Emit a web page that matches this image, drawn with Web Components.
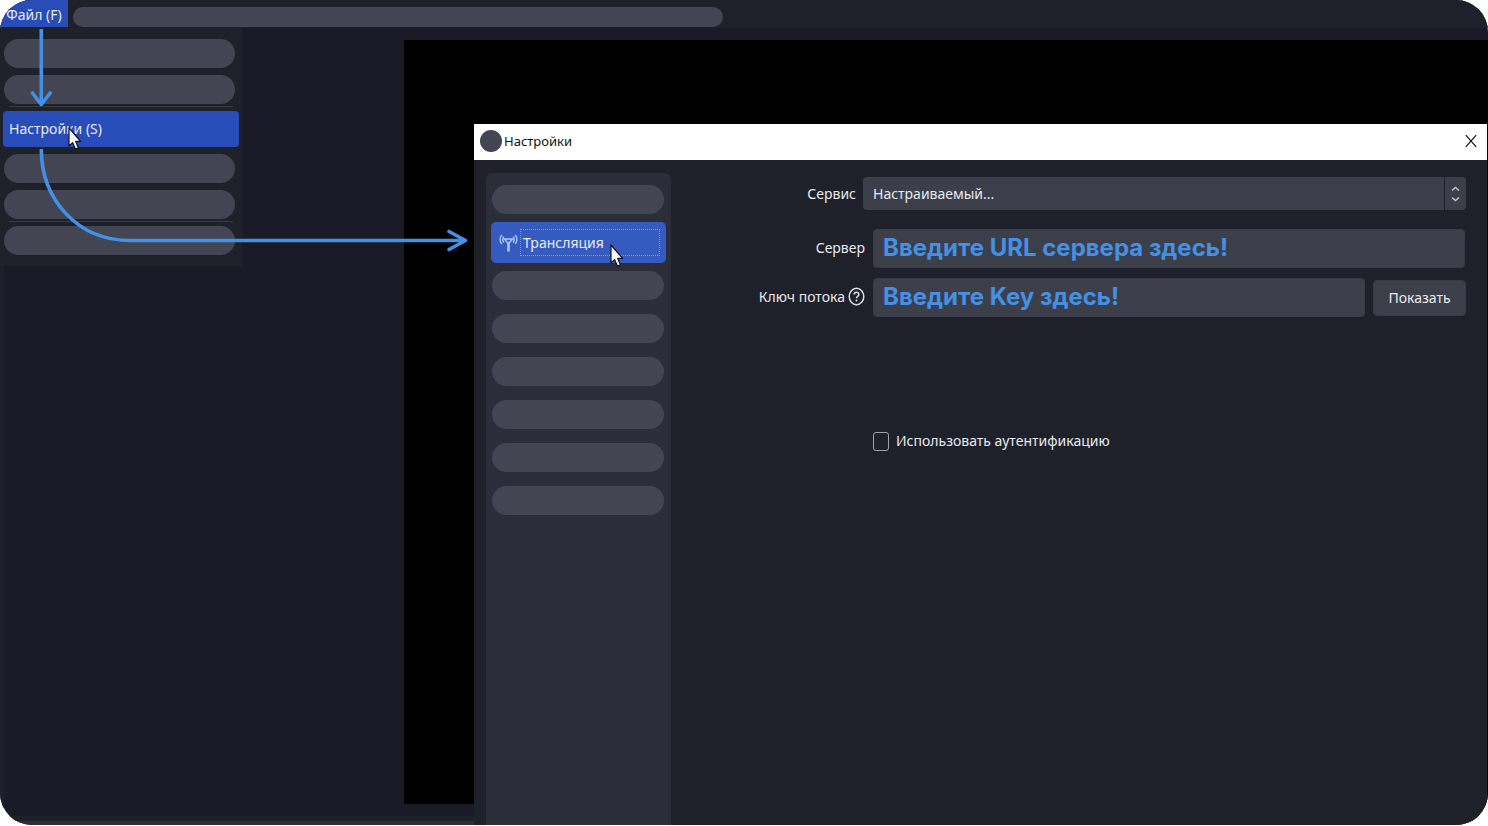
<!DOCTYPE html>
<html lang="ru">
<head>
<meta charset="utf-8">
<title>Настройки</title>
<style>
html, body { margin: 0; height: 100%; background: #fff; }
body {
  font: 14px/20px "Noto Sans", "Open Sans", sans-serif;
  color: #e8e9ee;
  --bar: #1f212a;
  --desk: #1a1b26;
  --panel: #2b2d38;
  --pill: #434552;
  --field: #3c3f4a;
  --accent: #284cb8;
  --hint: #4490e6;
}
</style>
</head>
<body>
<app-screen>
  <menu-bar slot="bar"></menu-bar>
  <preview-area></preview-area>
  <file-menu slot="overlay"></file-menu>
  <settings-window slot="overlay" heading="Настройки">
    <settings-nav slot="nav"></settings-nav>
    <stream-form></stream-form>
  </settings-window>
  <guide-arrows slot="overlay"></guide-arrows>
</app-screen>

<script>
function define(name, html, setup) {
  const template = document.createElement('template');
  template.innerHTML = html;
  customElements.define(name, class extends HTMLElement {
    constructor() {
      super();
      this.attachShadow({ mode: 'open' }).append(template.content.cloneNode(true));
    }
    connectedCallback() { if (setup) setup(this, this.shadowRoot); }
  });
}

define('place-holder', `
  <style>
    :host { display: block; box-sizing: border-box; height: 29px; border-radius: 15px; background: var(--pill); }
  </style>`);

define('mouse-pointer', `
  <style>
    :host { display: block; width: 14px; height: 24px; }
    svg { display: block; }
  </style>
  <svg width="14" height="24" viewBox="0 0 14 24" aria-hidden="true">
    <path d="M1 1V19L4.6 15.6L7.4 22L10.4 20.7L7.7 14.4H12.6Z" fill="#fff" stroke="#10131f" stroke-width="1.2" stroke-linejoin="round"/>
  </svg>`);

define('app-screen', `
  <style>
    :host { position: relative; display: flex; flex-direction: column; box-sizing: border-box;
      height: calc(100vh - 1px); min-height: 560px; overflow: hidden; border-radius: 32px; background: var(--desk); }
    main { flex: 1; display: flex; border-left: 4px solid #1d1f29; }
    footer { height: 4px; border-top: 5px solid var(--bar); background: var(--panel); }
  </style>
  <slot name="bar"></slot>
  <main><slot></slot></main>
  <footer></footer>
  <slot name="overlay"></slot>`);

define('menu-bar', `
  <style>
    :host { display: flex; align-items: flex-start; gap: 5px; height: 28px; background: var(--bar); }
    button { width: 68px; height: 27px; padding: 2px 0 0; border: 0; background: var(--accent); color: inherit; font: inherit; line-height: 24px; }
    place-holder { width: 44%; max-width: 650px; height: 20px; margin-top: 7px; }
  </style>
  <button type="button">Файл (F)</button>
  <place-holder></place-holder>`);

define('preview-area', `
  <style>
    :host { flex: 1; display: flex; padding: 12px 0 12px 400px; }
    div { flex: 1; background: #000; }
  </style>
  <div></div>`);

define('file-menu', `
  <style>
    :host { position: absolute; top: 28px; left: 0; box-sizing: border-box; width: 242px; padding: 11px 3px 4px; background: var(--bar); }
    nav { display: flex; flex-direction: column; }
    place-holder { width: 231px; margin: 0 1px 7px; }
    hr { width: 224px; height: 1px; margin: -5px 6px 4px; border: 0; background: #383a43; }
    button { position: relative; width: 236px; height: 36px; margin-bottom: 7px; padding: 0 6px; border: 0; border-radius: 4px;
      background: var(--accent); color: inherit; font: inherit; text-align: left; }
    mouse-pointer { position: absolute; left: 65px; top: 16px; }
  </style>
  <nav>
    <place-holder></place-holder>
    <place-holder></place-holder>
    <hr>
    <button type="button">Настройки (S)<mouse-pointer></mouse-pointer></button>
    <place-holder></place-holder>
    <place-holder></place-holder>
    <hr>
    <place-holder></place-holder>
  </nav>`);

define('settings-window', `
  <style>
    :host { position: absolute; top: 124px; left: 474px; right: 1px; bottom: 0; display: flex; flex-direction: column; background: var(--bar); }
    header { display: flex; align-items: center; gap: 2px; box-sizing: border-box; height: 36px; padding: 0 9px 2px 6px; background: #fff; color: #111; }
    i { width: 22px; height: 22px; border-radius: 50%; background: var(--pill); }
    h1 { flex: 1; margin: 0; font: inherit; font-size: 13px; line-height: 22px; }
    header button { width: 14px; height: 14px; padding: 0; border: 0; background: none; }
    svg { display: block; }
    section { flex: 1; display: flex; padding: 13px 21px 0 12px; }
  </style>
  <header><i></i><h1></h1>
    <button type="button" aria-label="Закрыть"><svg width="14" height="14" viewBox="0 0 14 14"><path d="M1.8 1.2L12.2 12.8M12.2 1.2L1.8 12.8" stroke="#111" stroke-width="1.2"/></svg></button>
  </header>
  <section><slot name="nav"></slot><slot></slot></section>`,
  (el, root) => { root.querySelector('h1').textContent = el.getAttribute('heading'); });

define('settings-nav', `
  <style>
    :host { box-sizing: border-box; width: 185px; padding: 12px 5px; border-radius: 6px 6px 0 0; background: var(--panel); }
    nav { display: flex; flex-direction: column; }
    place-holder { width: 172px; margin: 0 1px 14px; }
    place-holder:first-child { margin-bottom: 8px; }
    button { position: relative; display: flex; align-items: center; gap: 2px; height: 41px; margin-bottom: 8px; padding: 0 6px 0 8px;
      border: 0; border-radius: 5px; background: #365bc0; color: inherit; font: inherit; text-align: left; }
    span { flex: 1; box-sizing: border-box; height: 27px; padding-left: 2px; border: 1px dotted #b39a62; line-height: 25px; }
    mouse-pointer { position: absolute; left: 119px; top: 22px; }
  </style>
  <nav>
    <place-holder></place-holder>
    <button type="button">
      <svg width="19" height="18" viewBox="0 0 19 18" fill="none" stroke="#a9c6f3" aria-hidden="true">
        <path d="M5.4 5H13.6L9.5 9.6Z" stroke-width="1.4"/>
        <path d="M9.5 8V17.5" stroke-width="2.6"/>
        <path d="M4.8 2.6Q2.8 5.5 4.8 8.6M14.2 2.6Q16.2 5.5 14.2 8.6" stroke-width="1.5"/>
        <path d="M2.8 1Q-.6 5.5 2.8 10M16.2 1Q19.6 5.5 16.2 10" stroke-width="1.4"/>
      </svg>
      <span>Трансляция</span><mouse-pointer></mouse-pointer>
    </button>
    <place-holder></place-holder>
    <place-holder></place-holder>
    <place-holder></place-holder>
    <place-holder></place-holder>
    <place-holder></place-holder>
    <place-holder></place-holder>
  </nav>`);

define('stream-form', `
  <style>
    :host { flex: 1; min-width: 0; }
    form { display: grid; grid-template-columns: 194px minmax(0, 1fr); column-gap: 8px; padding-top: 4px; }
    label { white-space: nowrap; }
    .name { display: flex; align-items: center; justify-content: flex-end; gap: 3px; }
    form > .name { margin-bottom: 12px; }
    .service { grid-column: 1 / -1; display: grid; grid-template-columns: 185px minmax(0, 1fr); column-gap: 7px; margin-bottom: 19px; }
    .select { position: relative; display: flex; }
    select { appearance: none; flex: 1; height: 33px; padding: 1px 30px 0 10px; border: 0; border-radius: 4px; background: var(--field); color: inherit; font: inherit; }
    .select svg { position: absolute; right: 0; top: 0; pointer-events: none; }
    input[type=text] { box-sizing: border-box; flex: 1; min-width: 0; height: 39px; padding: 0 9px 2px; border: 1px solid #383b46; border-radius: 4px;
      background: var(--field); color: var(--hint); font: 700 24px/30px Inter, sans-serif; }
    input::placeholder { color: var(--hint); opacity: 1; }
    .field { display: flex; align-items: center; gap: 8px; margin-bottom: 10px; }
    .server { margin-right: 1px; }
    .field button { width: 93px; height: 36px; padding: 0; border: 1px solid #383b46; border-radius: 4px; background: var(--field); color: inherit; font: inherit; }
    .check { grid-column: 2; display: flex; align-items: center; gap: 7px; margin-top: 104px; }
    input[type=checkbox] { appearance: none; box-sizing: border-box; width: 16px; height: 19px; margin: 0; border: 1px solid #a0a1a8; border-radius: 3px; }
  </style>
  <form>
    <div class="service">
      <label class="name" for="service">Сервис</label>
      <div class="select">
        <select id="service"><option>Настраиваемый...</option></select>
        <svg width="22" height="33" viewBox="0 0 22 33" fill="none" aria-hidden="true">
          <path d="M.5 0V33" stroke="#1f212a"/>
          <path d="M8 13.5L11.5 10.5L15 13.5M8 20.5L11.5 23.5L15 20.5" stroke="#c4c5ca" stroke-width="1.5"/>
        </svg>
      </div>
    </div>
    <label class="name" for="server">Сервер</label>
    <div class="field server"><input type="text" id="server" placeholder="Введите URL сервера здесь!"></div>
    <label class="name" for="key">Ключ потока
      <svg width="17" height="19" viewBox="0 0 17 19" fill="none" stroke="#dcdde0" aria-hidden="true">
        <ellipse cx="8.5" cy="9.5" rx="7.3" ry="8.3" stroke-width="1.5"/>
        <path d="M6.2 7.5Q6.2 5.2 8.5 5.2T10.8 7.4Q10.8 8.6 9.6 9.3Q8.5 10 8.5 11.3" stroke-width="1.6"/>
        <circle cx="8.5" cy="13.6" r="1" fill="#dcdde0" stroke="none"/>
      </svg>
    </label>
    <div class="field"><input type="text" id="key" placeholder="Введите Key здесь!"><button type="button">Показать</button></div>
    <label class="check"><input type="checkbox">Использовать аутентификацию</label>
  </form>`);

define('guide-arrows', `
  <style>
    :host { position: absolute; top: 0; left: 0; pointer-events: none; }
    svg { display: block; }
  </style>
  <svg width="474" height="260" viewBox="0 0 474 260" fill="none" stroke="#4490e6" stroke-width="3.6" stroke-linecap="round" stroke-linejoin="round" aria-hidden="true">
    <path stroke-linecap="butt" d="M41.3 29V104M41.3 149C41.3 200 78 240.5 130 240.5H464"/>
    <path d="M32.5 93L41.3 104.5L50.2 93M449 231.5L465.5 240.5L449 249.5"/>
  </svg>`);
</script>
</body>
</html>
